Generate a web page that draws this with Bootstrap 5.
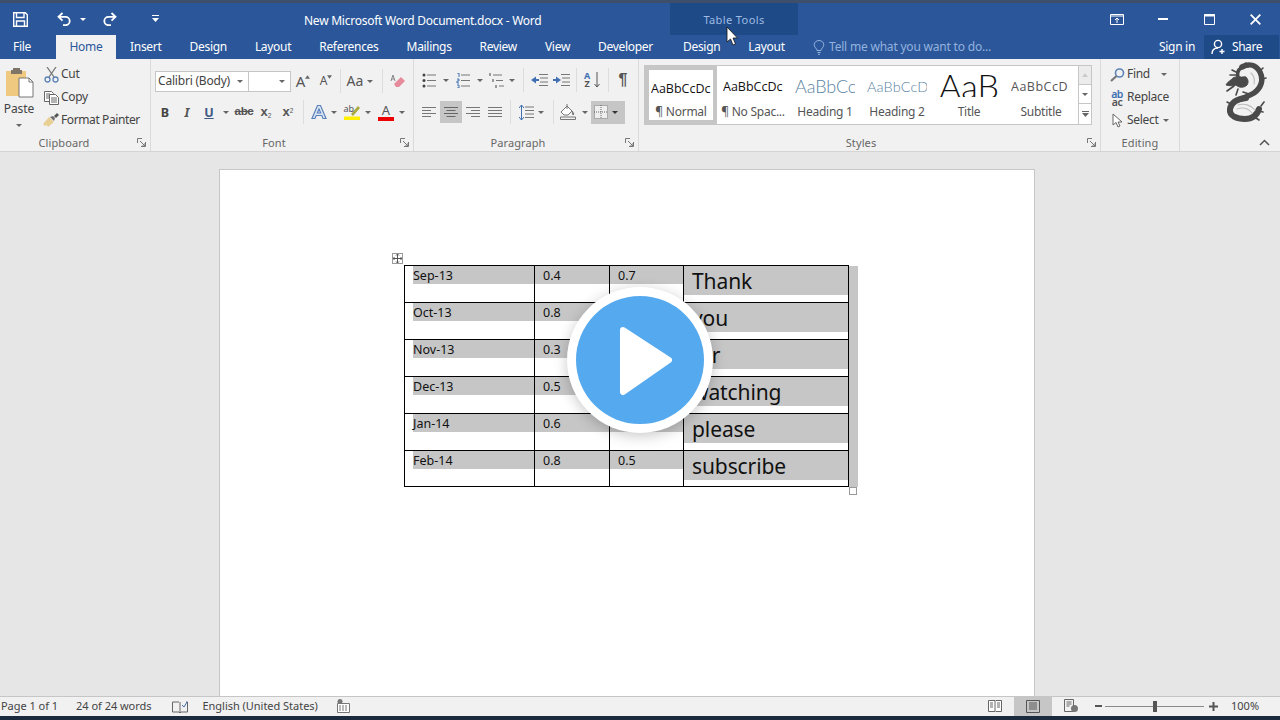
<!DOCTYPE html>
<html lang="en">
<head>
<meta charset="utf-8">
<title>New Microsoft Word Document.docx - Word</title>
<link href="https://cdn.jsdelivr.net/npm/bootstrap@5.3.0/dist/css/bootstrap.min.css" rel="stylesheet">
<style>
html,body{margin:0;height:720px;overflow:hidden;background:#e6e6e6}
body{font-family:"Noto Sans","Open Sans",sans-serif;font-size:12px;color:#444;line-height:1.2}
.app{width:1280px;height:720px;position:relative;overflow:hidden}
.strip-top{height:3px;background:#3d4f6b}
.titlebar{height:32px;background:#2b579a;color:#fff}
.qat-slot{height:32px}
.q-save{margin-left:13px}.q-undo{margin-left:29px}.caret-d.q-cr{margin-left:8px;border-top-color:#fff}.q-redo{margin-left:16px}.q-more{margin-left:35px}
.doc-title{position:absolute;left:304px;top:14px;color:#fff;font-size:12px;letter-spacing:-.25px;white-space:nowrap}
.ctx{position:absolute;left:670px;top:3px;width:128px;height:56px;background:#1f4a88}
.ctx-label{text-align:center;color:#9dbbe3;font-size:11px;letter-spacing:.4px;padding-top:10px}
.win-group{padding-right:2px}
.win-btn{width:46px;height:32px}
.tabbar{height:24px;background:#2b579a;position:relative}
.rtab{padding:5px 14px 0;height:24px;color:#fff;white-space:nowrap;font-size:12px;letter-spacing:-.3px;position:relative}
.rtab-file{padding:5px 0 0;width:44px;text-align:center}
.rtab-sp{width:12px}
.rtab-home{background:#f1f1f1;color:#2b579a;width:60px;padding:5px 0 0;text-align:center}
.rtab-ctx{margin-left:2px}
.tell{position:absolute;left:813px;top:0;height:24px;color:#93b2de;font-size:12px;letter-spacing:-.2px}
.signin{position:absolute;left:1159px;top:5px;color:#fff;letter-spacing:-.3px}
.share{position:absolute;left:1204px;top:0;width:75px;height:24px;background:#1f4a88;color:#fff;letter-spacing:-.45px}
.share-ic{margin-left:7px;margin-right:5px}
.ribbon{height:93px;background:#f1f1f1;border-bottom:1px solid #d4d4d4}
.rgroup{height:92px;border-right:1px solid #dadada;position:relative;flex:none}
.glabel{position:absolute;bottom:2px;left:0;color:#666;font-size:11px;text-align:center;letter-spacing:.1px}
.launch{position:absolute;bottom:4px;right:4px;width:9px;height:9px}
.g1{width:151px}.g2{width:263px}.g3{width:225px}.g4{width:462px}.g5{width:79px}.g6{width:101px;border:0}
.l1{width:128px}.l2{width:246px}.l3{width:208px}.l4{width:444px}.l5{width:78px}
.rr{height:22px;display:flex;align-items:center;flex:none;padding-left:4px}
.rf1{margin-top:11px}.rf2{margin-top:9px}.rp1{margin-top:10px}.rp2{margin-top:10px}
.sl{display:flex;align-items:center;justify-content:center;flex:none;height:22px;color:#444}
.w1{width:1px}.w2{width:2px}.w3{width:3px}.w4{width:4px}.w5{width:5px}.w7{width:7px}.w8{width:8px}.w10{width:10px}.w12{width:12px}.w14{width:14px}.w20{width:20px}.w22{width:22px}
.vsep{width:1px;height:24px;background:#dcdcdc;flex:none}
.caret-d{width:0;height:0;border-left:3px solid transparent;border-right:3px solid transparent;border-top:3px solid #666}
.fbox{height:21px;background:#fff;border:1px solid #c6c6c6;display:flex;align-items:center;flex:none;color:#444;position:relative}
.fname{width:94px;padding-left:2px;font-size:12px;letter-spacing:-.2px;white-space:nowrap}
.fsize{width:43px;margin-left:-1px}
.fbox .caret-d{position:absolute;right:5px;top:8px}
.boldx{font-family:"Noto Sans",sans-serif;font-weight:700;font-size:12.5px;color:#444}
.ital{font-family:"Noto Sans",sans-serif;font-style:italic;font-weight:700;font-size:12.5px;color:#555}
.undl{font-family:"Noto Sans",sans-serif;font-weight:700;font-size:12.5px;text-decoration:underline;color:#3f5a85}
.strk{font-family:"Liberation Sans",sans-serif;font-weight:700;font-size:11.5px;text-decoration:line-through;letter-spacing:-.3px;color:#555}
.subx{font-family:"Liberation Sans",sans-serif;font-weight:700;font-size:13px;color:#555}
.subx sub,.subx sup{font-size:6.500px;font-weight:400}
.aa{font-size:15px;color:#555;line-height:1}
.aa-sm{font-size:12px}
.aa-case{font-size:14px}
.aa-red{font-size:13px;margin-bottom:1px;line-height:12px}
.hi-ab{position:absolute;font-size:9px;line-height:9px;color:#555;left:0;top:0}
.hi-wrap{position:relative;width:17px;height:16px}
.selbg{background:#c6c6c6}
.bord-btn{width:34px;height:23px;background:#c6c6c6;display:flex;align-items:center;flex:none}
.caret-d.caret-dark{border-top-color:#333}
.pastecol{width:42px;flex:none;text-align:center;padding:8px 4px 0 0}
.paste-t{font-size:12px;color:#444;margin-top:4px;letter-spacing:-.1px}
.clipitems{padding-top:4px;color:#444}
.citem{height:23px;display:flex;align-items:center;white-space:nowrap;letter-spacing:-.3px}
.citem-fp{letter-spacing:-.4px}
.cicon{width:18px;margin-right:1px;display:flex;justify-content:center;flex:none}
.gallery{width:448px;height:60px;margin:6px 0 0 5px;background:#fff;border:1px solid #c6c6c6;position:relative;flex:none}
.sitem{width:72px;height:58px;flex:none;text-align:center;overflow:hidden;color:#444}
.sitem0{border:4px solid #c6c6c6}
.prev{height:39px;padding-top:2px;display:flex;align-items:center;justify-content:center;overflow:hidden;white-space:nowrap;color:#111;font-family:"Open Sans","Noto Sans",sans-serif;font-size:12.5px;letter-spacing:0}
.sitem0 .prev{height:35px}
.prevclip{width:60px;overflow:hidden;text-align:left;display:block}
.p-h1{color:#5b84a3;font-size:18px;letter-spacing:-.1px;font-family:"Lato",sans-serif;font-weight:300}
.p-h2{color:#5b84a3;font-size:14.5px;letter-spacing:.1px;font-family:"Lato",sans-serif;font-weight:300}
.p-ti{color:#111;font-size:34px;font-family:"Lato",sans-serif;font-weight:300;letter-spacing:0;line-height:30px;height:26px;margin-top:-5px}
.p-su{color:#555;letter-spacing:.5px;font-size:12.5px}
.slab{font-size:12px;letter-spacing:-.25px;white-space:nowrap;color:#555}
.spin{position:absolute;right:0;top:0;width:13px;height:58px;border-left:1px solid #c6c6c6;background:#fff}
.spin-c{height:19px;border-bottom:1px solid #c6c6c6;display:flex;align-items:center;justify-content:center}
.spin-c:first-child{background:#ececec}
.spin-c:last-child{border:0;height:20px}
.edit-items{padding:4px 0 0 7px}
.rep-ic{font-size:10.500px;line-height:8px;color:#3f6fb0;font-weight:600;letter-spacing:-.5px;display:block;text-align:center}
.rep-ic span{color:#555}
.az{font-size:9px;line-height:8px;color:#3f6fb0;font-weight:700;text-align:center}
.az span{color:#555}
.pil{font-size:16px;font-family:"Liberation Sans",sans-serif;font-weight:700;color:#555}
.dragon{margin:3px 14px 0 0}
.collapse-ic{position:absolute;right:11px;bottom:5px}
.find-cr{margin-left:11px}
.docarea{height:544px;background:#e6e6e6;padding:17px 0 0 219px;overflow:hidden}
.pagesheet{width:816px;height:560px;background:#fff;border:1px solid #c6c6c6;padding:95px 0 0 184px;position:relative}
.tblwrap{position:relative;width:445px}
.grid-t{table-layout:fixed;width:444px;border-collapse:collapse;margin:0;color:#111;font-family:"Noto Sans",sans-serif}
.grid-t td{border:1px solid #000;padding:0;height:37px;vertical-align:top;background:#fff}
.grid-t tr:last-child td{height:36px}
.c1{width:130px}.c2{width:75px}.c3{width:74px}.c4{width:165px}
.hl{display:block;background:#c6c6c6;height:18px;font-size:12.500px;line-height:20px;white-space:nowrap;padding-left:8px;letter-spacing:0}
.hl-1{margin-left:8px;padding-left:0}
.hl-big{height:29px;font-size:21px;line-height:31px;letter-spacing:-.1px;color:#111}
.eor{position:absolute;left:445px;top:1px;width:9px;height:221px;background:#c6c6c6}
.move-h{position:absolute;left:-12px;top:-12px;width:11px;height:11px;background:#fff;border:1px solid #9a9a9a;display:flex;align-items:center;justify-content:center}
.size-h{position:absolute;left:445px;top:222px;width:8px;height:8px;background:#fff;border:1px solid #9a9a9a}
.statusbar{height:20px;padding-bottom:1px;background:#f1f1f1;border-top:1px solid #c6c6c6;color:#444;font-size:11px;letter-spacing:-.03px;white-space:nowrap;position:relative}
.st-left{padding-left:1px;height:19px}
.st-words{margin-left:18px}
.st-proof{margin-left:20px}
.st-lang{margin-left:15px}
.st-cal{margin-left:19px}
.st-vbtn{width:38px;height:20px;flex:none}
.st-on{background:#c6c6c6}
.st-zoom{margin-left:5px}
.track{width:99px;height:1px;background:#8a8a8a;position:relative;flex:none;margin:0 5px 0 3px}
.thumb{position:absolute;left:48px;top:-5px;width:4px;height:11px;background:#555}
.st-pct{width:62px;text-align:right;padding-right:21px}
.strip-bot{height:4px;background:#1b2a3c}
.play-ring{position:absolute;left:567px;top:287px;width:146px;height:146px;border-radius:50%;background:#fff;box-shadow:0 3px 14px rgba(0,0,0,.22);display:flex;align-items:center;justify-content:center}
.play-core{width:128px;height:128px;border-radius:50%;background:#55a9ee;display:flex;align-items:center;justify-content:center}
.play-tri{margin:2px 0 0 12px}
.cursor-x{position:absolute;left:726px;top:26px}
</style>
</head>
<body>
<div class="app">
  <div class="strip-top"></div>

  <!-- title bar -->
  <div class="titlebar d-flex align-items-center position-relative">
    <div class="qat-slot d-flex align-items-center">
      <svg class="q-save" width="15" height="15" viewBox="0 0 15 15" fill="none" stroke="#fff" stroke-width="1.400"><path d="M.7.7h11.600l2 2v11.600H.7z"/><path d="M3.500 1v4.500h7.500V1M3.500 14V9h8v5"/></svg>
      <svg class="q-undo" width="15" height="14" viewBox="0 0 15 14" fill="none" stroke="#fff" stroke-width="1.800"><path d="M5.500 1 1.500 4.800l4 3.800M2 4.800h6.500a4.200 4.200 0 0 1 0 8.400H6"/></svg>
      <div class="caret-d q-cr"></div>
      <svg class="q-redo" width="15" height="14" viewBox="0 0 15 14" fill="none" stroke="#fff" stroke-width="1.800"><path d="M9.500 1l4 3.800-4 3.800M13 4.800H6.500a4.200 4.200 0 0 0 0 8.400H9"/></svg>
      <svg class="q-more" width="7" height="8" viewBox="0 0 7 8" fill="#fff"><path d="M0 0h7v1H0zM0 3h7L3.500 7z"/></svg>
    </div>
    <div class="ms-auto d-flex win-group">
      <div class="win-btn d-flex align-items-center justify-content-center">
        <svg width="14" height="11" viewBox="0 0 14 11" fill="none" stroke="#fff"><path d="M.5.5h13v10H.5zM1 2h12"/><path d="M7 9V4M5 6l2-2 2 2"/></svg>
      </div>
      <div class="win-btn d-flex align-items-center justify-content-center">
        <svg width="10" height="2" viewBox="0 0 10 2" fill="#fff"><path d="M0 0h10v2H0z"/></svg>
      </div>
      <div class="win-btn d-flex align-items-center justify-content-center">
        <svg width="11" height="11" viewBox="0 0 11 11" fill="none" stroke="#fff"><path d="M.5.5h10v10H.5z"/><path d="M0 1.500h11" stroke-width="2"/></svg>
      </div>
      <div class="win-btn d-flex align-items-center justify-content-center">
        <svg width="11" height="11" viewBox="0 0 11 11" fill="none" stroke="#fff" stroke-width="1.800"><path d="M.7.7l9.600 9.600M10.300.7.7 10.300"/></svg>
      </div>
    </div>
  </div>
  <div class="doc-title">New Microsoft Word Document.docx - Word</div>

  <div class="ctx"><div class="ctx-label">Table Tools</div></div>

  <!-- tabs -->
  <div class="tabbar d-flex">
    <div class="rtab rtab-file">File</div>
    <div class="rtab-sp"></div>
    <div class="rtab rtab-home">Home</div>
    <div class="rtab">Insert</div>
    <div class="rtab">Design</div>
    <div class="rtab">Layout</div>
    <div class="rtab">References</div>
    <div class="rtab">Mailings</div>
    <div class="rtab">Review</div>
    <div class="rtab">View</div>
    <div class="rtab">Developer</div>
    <div class="rtab rtab-ctx">Design</div>
    <div class="rtab">Layout</div>
    <div class="tell d-flex align-items-center">
      <svg class="me-1" width="12" height="15" viewBox="0 0 12 15" fill="none" stroke="#93b2de"><path d="M4 10.500c0-2-2.800-3-2.800-5.800a4.800 4.200 0 0 1 9.600 0C10.800 7.500 8 8.500 8 10.500zM4.500 12.500h3M5 14.300h2"/></svg>
      <span>Tell me what you want to do...</span>
    </div>
    <div class="signin">Sign in</div>
    <div class="share d-flex align-items-center">
      <svg class="share-ic" width="16" height="16" viewBox="0 0 16 16" fill="none" stroke="#fff" stroke-width="1.400"><circle cx="7" cy="5" r="3.600"/><path d="M1 15c0-4 2.500-6 6-6M11 10v5M8.500 12.500h5"/></svg>
      <span>Share</span>
    </div>
  </div>

  <!-- ribbon -->
  <div class="ribbon d-flex">
    <!-- Clipboard -->
    <div class="rgroup g1 d-flex">
      <div class="pastecol">
        <svg width="29" height="31" viewBox="0 0 29 31"><path d="M1 4h20v25H1z" fill="#efc97f"/><path d="M8 3h7V1H8zM6 3h11v4H6z" fill="#7f7468"/><path d="M14 11h10l4 4v15H14z" fill="#fff" stroke="#777"/><path d="M24 11v4h4" fill="none" stroke="#777"/></svg>
        <div class="paste-t">Paste</div>
        <div class="d-flex justify-content-center mt-2"><div class="caret-d"></div></div>
      </div>
      <div class="clipitems flex-grow-1">
        <div class="citem">
          <span class="cicon"><svg width="15" height="16" viewBox="0 0 15 16" fill="none" stroke="#777" stroke-width="1.300"><path d="M3 0l7 10M12 0 5 10"/><circle cx="3.500" cy="12.500" r="2.500" stroke="#5b82b8"/><circle cx="11.500" cy="12.500" r="2.500" stroke="#5b82b8"/></svg></span>Cut
        </div>
        <div class="citem">
          <span class="cicon"><svg width="15" height="14" viewBox="0 0 15 14" fill="#fff" stroke="#666"><path d="M.5.5h7l2 2v8H.5z"/><path d="M5.500 3.500h6l3 3v7h-9z"/><path d="M7 7h6M7 9h6M7 11h6M2 3h4M2 5h3M2 7h3"/></svg></span>Copy
        </div>
        <div class="citem citem-fp">
          <span class="cicon"><svg width="16" height="15" viewBox="0 0 16 15"><path d="M0 11 6 4l5 5-6 5c-1-1-1-2-1-2l-2 1z" fill="#e8cf93"/><path d="M7 4l3-1 2 2-1 3z" fill="#6f6f6f"/><path d="M11 3l3-3 2 2-3 3z" fill="#555"/></svg></span>Format Painter
        </div>
      </div>
      <div class="glabel l1">Clipboard</div>
      <svg class="launch" viewBox="0 0 9 9" fill="none" stroke="#777"><path d="M.5 5V.5H5M8.500 4v4.500H4M3 3l5 5M8 5v3H5"/></svg>
    </div>

    <!-- Font -->
    <div class="rgroup g2">
      <div class="rr rf1">
        <div class="fbox fname">Calibri (Body)<div class="caret-d"></div></div>
        <div class="fbox fsize"><div class="caret-d"></div></div>
        <div class="sl w1"></div>
        <div class="sl w22"><span class="aa">A</span><svg width="5" height="4" viewBox="0 0 6 4" fill="#666" class="mb-2"><path d="M0 4l3-4 3 4z"/></svg></div>
        <div class="sl w1"></div>
        <div class="sl w22"><span class="aa aa-sm">A</span><svg width="5" height="4" viewBox="0 0 6 4" fill="#666" class="mb-2"><path d="M0 0l3 4 3-4z"/></svg></div>
        <div class="sl w3"></div><div class="vsep"></div><div class="sl w4"></div>
        <div class="sl w20"><span class="aa aa-case">Aa</span></div>
        <div class="sl w10"><div class="caret-d"></div></div>
        <div class="sl w7"></div><div class="vsep"></div><div class="sl w4"></div>
        <div class="sl w22"><svg width="16" height="15" viewBox="0 0 16 15"><path d="M4 10 11 3l4 4-6 6H6z" fill="#e58b9b"/><path d="M3 1 1 7M3 1l2 6M1.500 5h3" stroke="#888" fill="none"/></svg></div>
      </div>
      <div class="rr rf2">
        <div class="sl w20"><span class="boldx">B</span></div>
        <div class="sl w2"></div>
        <div class="sl w20"><span class="ital">I</span></div>
        <div class="sl w2"></div>
        <div class="sl w20"><span class="undl">U</span></div>
        <div class="sl w14"><div class="caret-d"></div></div>
        <div class="sl w22"><span class="strk">abc</span></div>
        <div class="sl w22"><span class="subx">x<sub>2</sub></span></div>
        <div class="sl w22"><span class="subx">x<sup>2</sup></span></div>
        <div class="sl w4"></div><div class="vsep"></div><div class="sl w5"></div>
        <div class="sl w20"><svg width="16" height="16" viewBox="0 0 16 16" fill="#dce7f6" stroke="#5b82b8" stroke-width="1.200"><path d="M6.500 1.500h3L15 14.500h-3l-1.200-3H5.200l-1.200 3H1zM8 5 6.300 9h3.400z"/></svg></div>
        <div class="sl w10"><div class="caret-d"></div></div>
        <div class="sl w2"></div>
        <div class="sl w22"><div class="hi-wrap"><span class="hi-ab">ab</span><svg width="17" height="16" viewBox="0 0 17 16"><path d="M0 12.500h16V16H0z" fill="#ffef00"/><path d="M7 10l7-8 2 2-7 8z" fill="#a9a93c"/></svg></div></div>
        <div class="sl w10"><div class="caret-d"></div></div>
        <div class="sl w2"></div>
        <div class="sl w22 flex-column"><span class="aa aa-red">A</span><svg class="d-block" width="16" height="4" viewBox="0 0 16 4"><path d="M0 0h16v4H0z" fill="#e00"/></svg></div>
        <div class="sl w10"><div class="caret-d"></div></div>
      </div>
      <div class="glabel l2">Font</div>
      <svg class="launch" viewBox="0 0 9 9" fill="none" stroke="#777"><path d="M.5 5V.5H5M8.500 4v4.500H4M3 3l5 5M8 5v3H5"/></svg>
    </div>

    <!-- Paragraph -->
    <div class="rgroup g3">
      <div class="rr rp1">
        <div class="sl w22"><svg width="15" height="15" viewBox="0 0 15 15" stroke="#777"><path d="M5 2h9M5 7.500h9M5 13h9"/><circle cx="2" cy="2" r="1.500" fill="#444" stroke="none"/><circle cx="2" cy="7.500" r="1.500" fill="#444" stroke="none"/><circle cx="2" cy="13" r="1.500" fill="#444" stroke="none"/></svg></div>
        <div class="sl w12"><div class="caret-d"></div></div>
        <div class="sl w22"><svg width="15" height="15" viewBox="0 0 15 15" stroke="#777"><path d="M5 2h9M5 7.500h9M5 13h9"/><path d="M1 0h2v4M1 6h2v2H1v2h2M1 12h2v3H1" stroke="#3f6fb0" fill="none"/></svg></div>
        <div class="sl w12"><div class="caret-d"></div></div>
        <div class="sl w22"><svg width="16" height="15" viewBox="0 0 16 15" stroke="#777"><path d="M4 2h9M7 7.500h7M10 13h5"/><path d="M1 0v3M4 6v3M7 12v3" stroke="#444"/></svg></div>
        <div class="sl w8"><div class="caret-d"></div></div>
        <div class="sl w7"></div><div class="vsep"></div><div class="sl w4"></div>
        <div class="sl w22"><svg width="17" height="12" viewBox="0 0 17 12" stroke="#777"><path d="M8 .5h9M9 4h8M9 8h8M8 11.500h9"/><path d="M0 6l5-3.500v7z" fill="#3f6fb0" stroke="none"/><path d="M4 6h4" stroke="#3f6fb0" stroke-width="2"/></svg></div>
        <div class="sl w22"><svg width="17" height="12" viewBox="0 0 17 12" stroke="#777"><path d="M8 .5h9M9 4h8M9 8h8M8 11.500h9"/><path d="M8 6 3 2.500v7z" fill="#3f6fb0" stroke="none"/><path d="M0 6h4" stroke="#3f6fb0" stroke-width="2"/></svg></div>
        <div class="sl w4"></div><div class="vsep"></div><div class="sl w4"></div>
        <div class="sl w22"><span class="az">A<br><span>Z</span></span><svg class="ms-1" width="6" height="16" viewBox="0 0 6 16" fill="none" stroke="#555"><path d="M3 0v15M.5 12 3 15l2.500-3"/></svg></div>
        <div class="sl w5"></div><div class="vsep"></div><div class="sl w3"></div>
        <div class="sl w22"><span class="pil">¶</span></div>
      </div>
      <div class="rr rp2">
        <div class="sl w22"><svg width="14" height="11" viewBox="0 0 14 11" stroke="#777"><path d="M0 .5h14M0 3.500h9M0 6.500h14M0 9.500h9"/></svg></div>
        <div class="sl w22 selbg"><svg width="14" height="11" viewBox="0 0 14 11" stroke="#666"><path d="M0 .5h14M2.500 3.500h9M0 6.500h14M2.500 9.500h9"/></svg></div>
        <div class="sl w22"><svg width="14" height="11" viewBox="0 0 14 11" stroke="#777"><path d="M0 .5h14M5 3.500h9M0 6.500h14M5 9.500h9"/></svg></div>
        <div class="sl w22"><svg width="14" height="11" viewBox="0 0 14 11" stroke="#777"><path d="M0 .5h14M0 3.500h14M0 6.500h14M0 9.500h14"/></svg></div>
        <div class="sl w4"></div><div class="vsep"></div><div class="sl w4"></div>
        <div class="sl w22"><svg width="15" height="15" viewBox="0 0 15 15" fill="none"><path d="M6 2h9M6 5.500h9M6 9h9M6 12.500h9" stroke="#777"/><path d="M2.500 0v15M0 3l2.500-3L5 3M0 12l2.500 3L5 12" stroke="#3f6fb0"/></svg></div>
        <div class="sl w8"><div class="caret-d"></div></div>
        <div class="sl w8"></div><div class="vsep"></div><div class="sl w3"></div>
        <div class="sl w22"><svg width="16" height="16" viewBox="0 0 16 16" fill="none" stroke="#777"><path d="M1 8l6-6 5 5-4 4H4z" fill="#fff"/><path d="M7 0v5"/><path d="M12 7l2 3-1 1z" fill="#777"/><path d="M.5 13h15v2.500H.5z" fill="#f1f1f1"/></svg></div>
        <div class="sl w12"><div class="caret-d"></div></div>
        <div class="bord-btn">
          <div class="sl w3"></div>
          <svg width="14" height="14" viewBox="0 0 14 14"><path d="M0 0h14v14H0z" fill="#efefef"/><path d="M.5.500h13v13H.5zM7 0v14M0 7h14" fill="none" stroke="#666" stroke-dasharray="1 1"/></svg>
          <div class="sl w14"><div class="caret-d caret-dark"></div></div>
        </div>
      </div>
      <div class="glabel l3">Paragraph</div>
      <svg class="launch" viewBox="0 0 9 9" fill="none" stroke="#777"><path d="M.5 5V.5H5M8.500 4v4.500H4M3 3l5 5M8 5v3H5"/></svg>
    </div>

    <!-- Styles -->
    <div class="rgroup g4">
      <div class="gallery d-flex">
        <div class="sitem sitem0"><div class="prev"><span class="prevclip">AaBbCcDc</span></div><div class="slab">¶ Normal</div></div>
        <div class="sitem"><div class="prev"><span class="prevclip">AaBbCcDc</span></div><div class="slab">¶ No Spac...</div></div>
        <div class="sitem"><div class="prev"><span class="prevclip p-h1">AaBbCc</span></div><div class="slab">Heading 1</div></div>
        <div class="sitem"><div class="prev"><span class="prevclip p-h2">AaBbCcD</span></div><div class="slab">Heading 2</div></div>
        <div class="sitem"><div class="prev"><span class="prevclip p-ti">AaB</span></div><div class="slab">Title</div></div>
        <div class="sitem"><div class="prev"><span class="prevclip p-su">AaBbCcD</span></div><div class="slab">Subtitle</div></div>
        <div class="spin">
          <div class="spin-c"><svg width="6" height="4" viewBox="0 0 6 4" fill="#ccc"><path d="M0 4l3-4 3 4z"/></svg></div>
          <div class="spin-c"><div class="caret-d"></div></div>
          <div class="spin-c"><svg width="7" height="6" viewBox="0 0 7 6" fill="#666"><path d="M0 0h7v1H0zM0 2h7L3.500 6z"/></svg></div>
        </div>
      </div>
      <div class="glabel l4">Styles</div>
      <svg class="launch" viewBox="0 0 9 9" fill="none" stroke="#777"><path d="M.5 5V.5H5M8.500 4v4.500H4M3 3l5 5M8 5v3H5"/></svg>
    </div>

    <!-- Editing -->
    <div class="rgroup g5">
      <div class="edit-items">
        <div class="citem"><span class="cicon"><svg width="15" height="14" viewBox="0 0 15 14" fill="none" stroke="#5b82b8" stroke-width="1.600"><circle cx="9.500" cy="5" r="4"/><path d="M6.500 8 1 13" stroke="#777" stroke-width="2.200"/></svg></span>Find<span class="caret-d find-cr"></span></div>
        <div class="citem"><span class="cicon rep-ic">ab<br><span>ac</span></span>Replace</div>
        <div class="citem"><span class="cicon"><svg width="11" height="15" viewBox="0 0 11 15" fill="#fff" stroke="#666"><path d="M1 1v11l3-2.500L6 14l2-1-2-4h4z"/></svg></span>Select<span class="caret-d ms-1"></span></div>
      </div>
      <div class="glabel l5">Editing</div>
    </div>

    <!-- Logo -->
    <div class="rgroup g6 d-flex justify-content-end">
      <svg class="dragon" width="42" height="60" viewBox="0 0 42 60" fill="none" stroke="#4a4a4a" stroke-linecap="round" stroke-linejoin="round">
        <path d="M17 5c7-4 14-2 18 5 4 8 1 16-6 21-5 3-9 4-13 6" stroke-width="5.500"/>
        <path d="M21 36C12 37 6 41 5 47c-1 7 7 10 15 10 7 0 12-4 14-10" stroke-width="6"/>
        <path d="M16 15c-4-1-8 0-10 3-2 1-4 3-5 5 4 1 7 1 10 0 3 3 8 3 11 0 2-3 1-6-1-8z" fill="#4a4a4a" stroke-width="1"/>
        <path d="M16 6c-3 2-4 5-3 9" stroke-width="3.500"/>
        <path d="M7 8l6 3M5 13l7 0M2 29l7-5M13 27l-2 6M21 1l2 4M38 6l-3 3M41 16l-4 1M18 30l6 2M36 44l3-4M38 50l-4-1M31 56l3 2M2 40l4 2" stroke-width="1.600"/>
        <path d="M13 43c6-2 13 0 17 5M12 47c6-2 11-1 15 4M26 11c3 3 4 7 3 11" stroke="#bdbdbd" stroke-width="1.100"/>
      </svg>
      <svg class="collapse-ic" width="11" height="7" viewBox="0 0 11 7" fill="none" stroke="#555" stroke-width="1.500"><path d="M1 6l4.500-4.500L10 6"/></svg>
    </div>
  </div>

  <!-- document -->
  <div class="docarea">
    <div class="pagesheet">
      <div class="tblwrap">
        <div class="move-h"><svg width="9" height="9" viewBox="0 0 9 9" stroke="#555" fill="none"><path d="M4.500 0v9M0 4.500h9M3 1.500 4.500 0 6 1.500M3 7.500 4.500 9 6 7.500M1.500 3 0 4.500 1.500 6M7.500 3 9 4.500 7.500 6"/></svg></div>
        <table class="grid-t">
          <colgroup><col class="c1"><col class="c2"><col class="c3"><col class="c4"></colgroup>
          <tr><td><span class="hl hl-1">Sep-13</span></td><td><span class="hl">0.4</span></td><td><span class="hl">0.7</span></td><td><span class="hl hl-big">Thank</span></td></tr>
          <tr><td><span class="hl hl-1">Oct-13</span></td><td><span class="hl">0.8</span></td><td><span class="hl"></span></td><td><span class="hl hl-big">you</span></td></tr>
          <tr><td><span class="hl hl-1">Nov-13</span></td><td><span class="hl">0.3</span></td><td><span class="hl"></span></td><td><span class="hl hl-big">for</span></td></tr>
          <tr><td><span class="hl hl-1">Dec-13</span></td><td><span class="hl">0.5</span></td><td><span class="hl"></span></td><td><span class="hl hl-big">watching</span></td></tr>
          <tr><td><span class="hl hl-1">Jan-14</span></td><td><span class="hl">0.6</span></td><td><span class="hl"></span></td><td><span class="hl hl-big">please</span></td></tr>
          <tr><td><span class="hl hl-1">Feb-14</span></td><td><span class="hl">0.8</span></td><td><span class="hl">0.5</span></td><td><span class="hl hl-big">subscribe</span></td></tr>
        </table>
        <div class="eor"></div>
        <div class="size-h"></div>
      </div>
    </div>
  </div>

  <!-- status bar -->
  <div class="statusbar d-flex align-items-center">
    <div class="st-left d-flex align-items-center">Page 1 of 1</div>
    <div class="st-words d-flex align-items-center">24 of 24 words</div>
    <svg class="st-proof" width="16" height="13" viewBox="0 0 16 13" fill="none" stroke="#666"><path d="M7 2H.5v10H7l1 1 1-1h6.500V2H14M8 2v11"/><path d="M10 5l2 2 3-5" stroke="#3f6fb0"/></svg>
    <div class="st-lang">English (United States)</div>
    <svg class="st-cal" width="13" height="14" viewBox="0 0 13 14"><path d="M.5 4.500h12v9H.5z" fill="#fff" stroke="#777"/><path d="M2 7h9M2 9h9M2 11h9" stroke="#777" stroke-dasharray="2 1"/><circle cx="3" cy="2.500" r="2.500" fill="#777"/></svg>
    <div class="ms-auto d-flex align-items-center">
      <div class="st-vbtn d-flex align-items-center justify-content-center"><svg width="14" height="12" viewBox="0 0 14 12" fill="#fff" stroke="#666"><path d="M.5.5H7l.5.500L8 .5h5.500v11H8l-.5-.5-.5.500H.5zM7 1v10M2 3h3M2 5h3M2 7h3M9 3h3M9 5h3M9 7h3"/></svg></div>
      <div class="st-vbtn st-on d-flex align-items-center justify-content-center"><svg width="14" height="13" viewBox="0 0 14 13" fill="none" stroke="#555"><path d="M.5.500h13v12H.5zM3 3h8M3 5h8M3 7h8M3 9h8"/></svg></div>
      <div class="st-vbtn d-flex align-items-center justify-content-center"><svg width="15" height="14" viewBox="0 0 15 14" fill="none" stroke="#666"><path d="M.5.500h9v12H.5zM2.500 3h5M2.500 5h5M2.500 7h3"/><circle cx="10.500" cy="9.500" r="3.500" fill="#777" stroke="none"/></svg></div>
      <div class="st-zoom d-flex align-items-center">
        <svg width="7" height="2" viewBox="0 0 7 2" fill="#555"><path d="M0 0h7v2H0z"/></svg>
        <div class="track"><div class="thumb"></div></div>
        <svg width="9" height="9" viewBox="0 0 9 9" fill="#555"><path d="M3.500 0h2v3.500H9v2H5.500V9h-2V5.500H0v-2h3.500z"/></svg>
      </div>
      <div class="st-pct">100%</div>
    </div>
  </div>
  <div class="strip-bot"></div>

  <!-- play overlay -->
  <div class="play-ring">
    <div class="play-core">
      <svg class="play-tri" width="54" height="70" viewBox="0 0 54 70"><path d="M4 4 50 34 4 66z" fill="#fff" stroke="#fff" stroke-width="6" stroke-linejoin="round"/></svg>
    </div>
  </div>

  <!-- mouse pointer -->
  <svg class="cursor-x" width="12" height="20" viewBox="0 0 12 20"><path d="M1 1v15l3.500-3 2.500 6 2.500-1-2.500-6h4.500z" fill="#fff" stroke="#111" stroke-width=".8"/></svg>
</div>
<script src="https://cdn.jsdelivr.net/npm/bootstrap@5.3.0/dist/js/bootstrap.bundle.min.js"></script>
</body>
</html>
